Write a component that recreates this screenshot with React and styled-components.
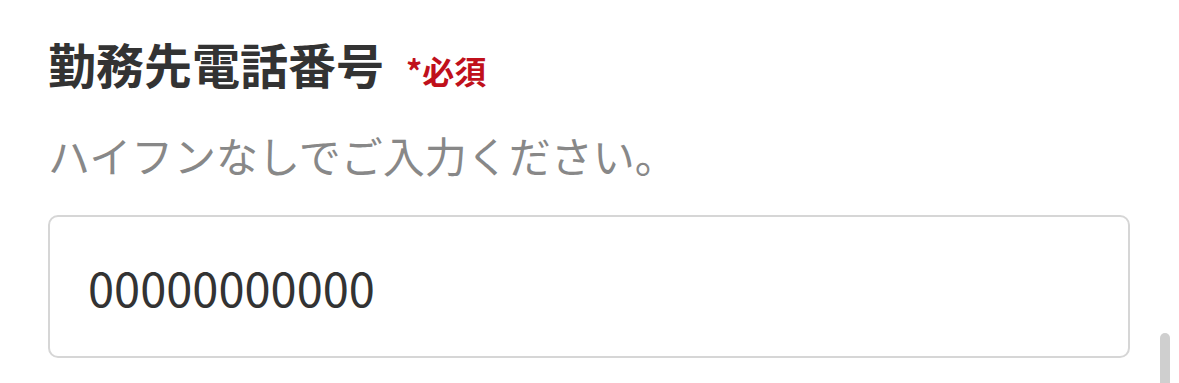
import React from 'react';
import styled, { createGlobalStyle } from 'styled-components';

const GlobalStyle = createGlobalStyle`
  html, body {
    margin: 0;
    padding: 0;
    background: #fff;
    overflow: hidden;
  }
  body {
    font-family: "Noto Sans CJK JP", "Noto Sans", sans-serif;
  }
`;

const Page = styled.div`
  position: relative;
  height: 383px;
  padding: 30px 49px 0 48px;
  box-sizing: border-box;
  overflow: hidden;
`;

const Field = styled.div`
  display: flex;
  flex-direction: column;
`;

const Label = styled.label`
  display: flex;
  align-items: baseline;
  gap: 22px;
  font-size: 48px;
  line-height: 66px;
  font-weight: 700;
  color: #333;
`;

const Required = styled.span`
  font-size: 32px;
  font-weight: 700;
  color: #c0101b;
`;

const Hint = styled.p`
  margin: 24px 0 0;
  font-size: 42px;
  line-height: 56px;
  color: #888;
`;

const Input = styled.input`
  margin-top: 32px;
  height: 143px;
  box-sizing: border-box;
  border: 2px solid #d6d6d6;
  border-radius: 10px;
  padding: 0 38px;
  font-family: "Noto Sans CJK JP", "Noto Sans", sans-serif;
  font-size: 47px;
  color: #333;
  background: #fff;
  outline: none;
`;

const ScrollThumb = styled.div`
  position: absolute;
  right: 9px;
  top: 333px;
  width: 10px;
  height: 70px;
  border-radius: 5px;
  background: #cfcfcf;
`;

export default function App() {
  return (
    <>
      <GlobalStyle />
      <Page>
        <Field>
          <Label>
            勤務先電話番号
            <Required>*必須</Required>
          </Label>
          <Hint>ハイフンなしでご入力ください。</Hint>
          <Input type="tel" defaultValue="00000000000" />
        </Field>
        <ScrollThumb />
      </Page>
    </>
  );
}
